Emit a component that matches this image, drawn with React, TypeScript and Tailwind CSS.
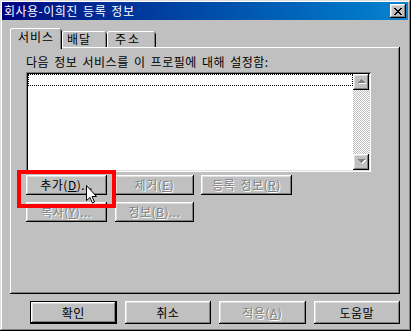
import React from 'react';

const raised = 'shadow-[inset_-1px_-1px_#000,inset_1px_1px_#fff,inset_-2px_-2px_#808080,inset_2px_2px_#dfdfdf]';
const dimText = 'text-[#808080] [text-shadow:1px_1px_0_#fff]';

function Btn({ children, className = '', disabled = false, isDefault = false }: { children: React.ReactNode; className?: string; disabled?: boolean; isDefault?: boolean }) {
  const frame = isDefault
    ? 'shadow-[inset_0_0_0_1px_#000,inset_-2px_-2px_#000,inset_2px_2px_#fff,inset_-3px_-3px_#808080,inset_3px_3px_#dfdfdf]'
    : raised;
  return (
    <div className={`flex items-center justify-center bg-[#c0c0c0] text-[12px] leading-[14px] ${frame} ${disabled ? dimText : 'text-black'} ${className}`}>
      {children}
    </div>
  );
}

// scrollbar arrow, greyed out (list is empty)
function Arrow({ down = false }: { down?: boolean }) {
  const rows = down ? [[5, 7], [6, 5], [7, 3], [8, 1]] : [[5, 1], [6, 3], [7, 5], [8, 7]];
  return (
    <svg width="16" height="16" viewBox="0 0 16 16" shapeRendering="crispEdges">
      {rows.map(([y, w]) => (
        <rect key={'s' + y} x={8 - (w - 1) / 2 - 0.5 + 1} y={y + 1} width={w} height={1} fill="#fff" />
      ))}
      {rows.map(([y, w]) => (
        <rect key={'g' + y} x={8 - (w - 1) / 2 - 0.5} y={y} width={w} height={1} fill="#808080" />
      ))}
    </svg>
  );
}

function CloseGlyph() {
  const px = [
    [0, 0], [1, 0], [6, 0], [7, 0],
    [1, 1], [2, 1], [5, 1], [6, 1],
    [2, 2], [3, 2], [4, 2], [5, 2],
    [3, 3], [4, 3],
    [2, 4], [3, 4], [4, 4], [5, 4],
    [1, 5], [2, 5], [5, 5], [6, 5],
    [0, 6], [1, 6], [6, 6], [7, 6],
  ];
  return (
    <svg width="8" height="7" viewBox="0 0 8 7" shapeRendering="crispEdges">
      {px.map(([x, y]) => <rect key={`${x}-${y}`} x={x} y={y} width={1} height={1} fill="#000" />)}
    </svg>
  );
}

export default function App() {
  return (
    <div className="relative w-[411px] h-[331px] flex flex-col bg-[#c0c0c0] pl-[2px] pt-[2px] pr-[3px] pb-[3px] shadow-[inset_-1px_-1px_#000,inset_1px_1px_#dfdfdf,inset_-2px_-2px_#808080,inset_2px_2px_#fff] font-['Noto_Sans_CJK_KR','Noto_Sans',sans-serif] tracking-[0.5px] [word-spacing:2px] select-none">
      {/* title bar */}
      <div className="h-[18px] flex items-center justify-between bg-linear-to-r from-[#000080] to-[#1084d0] pl-[2px]">
        <span className="text-white text-[12px] leading-none">회사용-이희진 등록 정보</span>
        <div className={`w-[16px] h-[14px] mr-[2px] flex items-center justify-center bg-[#c0c0c0] ${raised}`}>
          <CloseGlyph />
        </div>
      </div>

      <div className="flex-1 flex flex-col px-[8px]">
        {/* tabs */}
        <div className="mt-[8px] h-[19px] flex items-end">
          <div className="relative z-10 w-[52px] h-[21px] -mb-[2px] bg-[#c0c0c0] pl-[8px] pt-[2px] text-[12px] leading-[14px] tracking-[1px] rounded-t-[3px] shadow-[inset_1px_0_#fff,inset_0_1px_#fff,inset_-1px_0_#000,inset_-2px_0_#808080]">
            서비스
          </div>
          <div className="w-[45px] h-[16px] pl-[5px] pt-[1px] text-[12px] leading-[14px] tracking-[1px] rounded-t-[3px] shadow-[inset_1px_0_#fff,inset_0_1px_#fff,inset_-1px_0_#000,inset_-2px_0_#808080]">
            배달
          </div>
          <div className="w-[49px] h-[16px] pl-[8px] pt-[1px] text-[12px] leading-[14px] tracking-[2px] rounded-t-[3px] shadow-[inset_1px_0_#fff,inset_0_1px_#fff,inset_-1px_0_#000,inset_-2px_0_#808080]">
            주소
          </div>
        </div>

        {/* tab page */}
        <div className="h-[247px] flex flex-col pt-[8px] pl-[16px] shadow-[inset_-1px_-1px_#000,inset_1px_1px_#fff,inset_-2px_-2px_#808080]">
          <div className="text-[12px] leading-[14px] text-black">다음 정보 서비스를 이 프로필에 대해 설정함:</div>

          <div className="mt-[3px] w-[345px] h-[100px] flex bg-white p-[2px] shadow-[inset_1px_1px_#808080,inset_-1px_-1px_#fff,inset_2px_2px_#000,inset_-2px_-2px_#dfdfdf]">
            <div className="flex-1">
              <div className="h-[12px] border border-dotted border-black" />
            </div>
            <div className="w-[16px] flex flex-col">
              <div className={`h-[16px] bg-[#c0c0c0] ${raised}`}><Arrow /></div>
              <div className="flex-1 bg-[image:repeating-conic-gradient(#c0c0c0_0_25%,#fff_0_50%)] bg-[length:2px_2px]" />
              <div className={`h-[16px] bg-[#c0c0c0] ${raised}`}><Arrow down /></div>
            </div>
          </div>

          <div className="mt-[3px] flex">
            <Btn className="w-[81px] h-[20px]">추가(<u>D</u>)...</Btn>
            <Btn disabled className="ml-[8px] w-[79px] h-[20px]">제거(<u>E</u>)</Btn>
            <Btn disabled className="ml-[7px] w-[91px] h-[20px]">등록 정보(<u>R</u>)</Btn>
          </div>
          <div className="mt-[7px] flex">
            <Btn disabled className="w-[81px] h-[20px]">복사(<u>Y</u>)...</Btn>
            <Btn disabled className="ml-[8px] w-[79px] h-[20px]">정보(<u>B</u>)...</Btn>
          </div>
        </div>

        {/* dialog buttons */}
        <div className="mt-[7px] ml-[20px] flex gap-[8px]">
          <Btn isDefault className="w-[87px] h-[23px]">확인</Btn>
          <Btn className="w-[87px] h-[23px]">취소</Btn>
          <Btn disabled className="w-[87px] h-[23px]">적용(<u>A</u>)</Btn>
          <Btn className="w-[87px] h-[23px]">도움말</Btn>
        </div>
      </div>

      {/* annotation + mouse pointer */}
      <div className="absolute left-[17px] top-[170px] w-[99px] h-[38px] border-4 border-[#ff0000] pointer-events-none" />
      <svg className="absolute left-[86px] top-[185px]" width="12" height="19" viewBox="0 0 12 19">
        <path d="M0.5 0.5V15.5L4 12.5L6.5 18L8.5 17L6 11.5H10.5Z" fill="#fff" stroke="#000" strokeWidth="1" />
      </svg>
    </div>
  );
}
